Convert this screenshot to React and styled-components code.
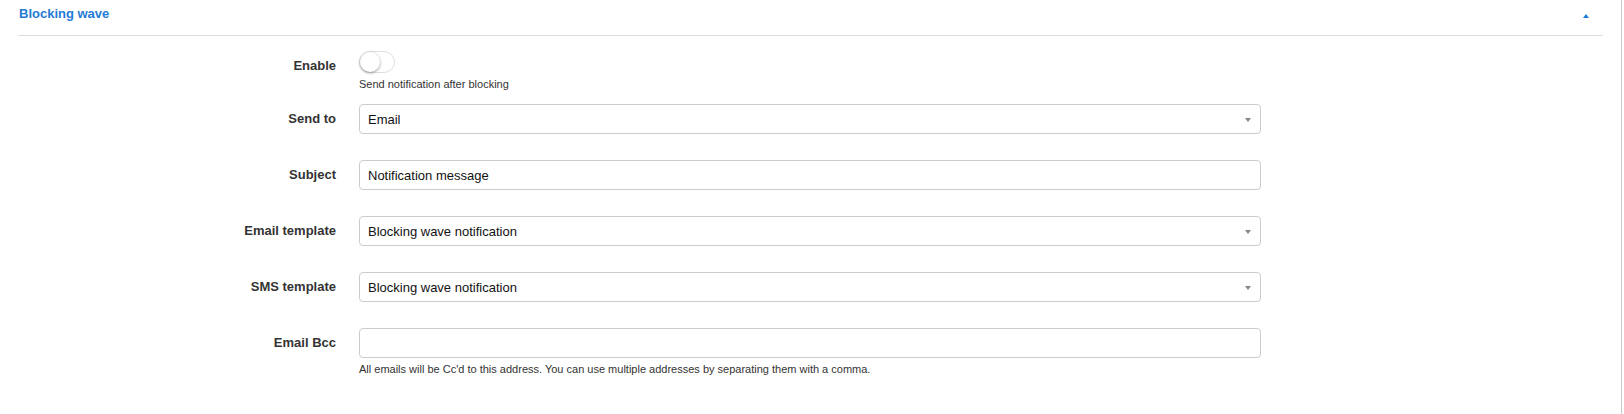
import React from "react";
import styled, { createGlobalStyle } from "styled-components";

const GlobalStyle = createGlobalStyle`
  html, body {
    margin: 0;
    padding: 0;
    background: #fff;
  }
  body {
    font-family: "Liberation Sans", Arial, sans-serif;
    color: #333;
  }
`;

const Page = styled.div`
  width: 1621px;
  min-height: 414px;
  border-right: 1px solid #cccccc;
  background: #fff;
`;

const Header = styled.div`
  display: flex;
  align-items: flex-start;
  justify-content: space-between;
  margin: 0 18px 0 18px;
  padding: 5px 14px 12px 1px;
  border-bottom: 1px solid #dddddd;
`;

const Title = styled.span`
  font-size: 13px;
  line-height: 18px;
  font-weight: bold;
  color: #1f7bd5;
`;

const Caret = styled.span`
  display: block;
  width: 0;
  height: 0;
  margin-top: 9px;
  border-left: 3.5px solid transparent;
  border-right: 3.5px solid transparent;
  border-bottom: 4px solid #1f7bd5;
`;

const Form = styled.div`
  display: flex;
  flex-direction: column;
  gap: 13px;
  padding: 15px 0 0 18px;
`;

const Group = styled.div`
  display: grid;
  grid-template-columns: 318px 902px;
  column-gap: 23px;
  align-items: start;
`;

const Label = styled.label`
  display: block;
  text-align: right;
  font-size: 13px;
  line-height: 18px;
  font-weight: bold;
  color: #333;
  padding-top: 6px;
`;

const Control = styled.div`
  display: flex;
  flex-direction: column;
  align-items: flex-start;
  min-height: ${(p) => (p.$compact ? "0" : "43px")};
`;

const Help = styled.div`
  margin-top: 4px;
  font-size: 11px;
  line-height: 14px;
  color: #333;
`;

const Toggle = styled.span`
  position: relative;
  display: inline-block;
  box-sizing: border-box;
  width: 36px;
  height: 22px;
  border: 1px solid #dfdfdf;
  border-radius: 11px;
  background: #fff;
`;

const Knob = styled.span`
  position: absolute;
  top: 0;
  left: 0;
  width: 20px;
  height: 20px;
  border-radius: 50%;
  background: #fff;
  box-shadow: 0 1px 3px rgba(0, 0, 0, 0.4);
`;

const Field = styled.div`
  position: relative;
  box-sizing: border-box;
  width: 902px;
  height: 30px;
  border: 1px solid #cccccc;
  border-radius: 4px;
  background: #fff;
  padding: 0 8px;
  display: flex;
  align-items: center;
  font-size: 13px;
  color: #111;
`;

const Arrow = styled.span`
  position: absolute;
  right: 9px;
  top: 13px;
  width: 0;
  height: 0;
  border-left: 3.5px solid transparent;
  border-right: 3.5px solid transparent;
  border-top: 4px solid #888;
`;

const rows = [
  { label: "Send to", value: "Email", select: true },
  { label: "Subject", value: "Notification message" },
  { label: "Email template", value: "Blocking wave notification", select: true },
  { label: "SMS template", value: "Blocking wave notification", select: true },
  {
    label: "Email Bcc",
    value: "",
    help: "All emails will be Cc'd to this address. You can use multiple addresses by separating them with a comma.",
  },
];

export default function App() {
  return (
    <>
      <GlobalStyle />
      <Page>
        <Header>
          <Title>Blocking wave</Title>
          <Caret />
        </Header>
        <Form>
          <Group>
            <Label>Enable</Label>
            <Control $compact>
              <Toggle>
                <Knob />
              </Toggle>
              <Help>Send notification after blocking</Help>
            </Control>
          </Group>
          {rows.map((r) => (
            <Group key={r.label}>
              <Label>{r.label}</Label>
              <Control>
                <Field>
                  {r.value}
                  {r.select && <Arrow />}
                </Field>
                {r.help && <Help>{r.help}</Help>}
              </Control>
            </Group>
          ))}
        </Form>
      </Page>
    </>
  );
}
